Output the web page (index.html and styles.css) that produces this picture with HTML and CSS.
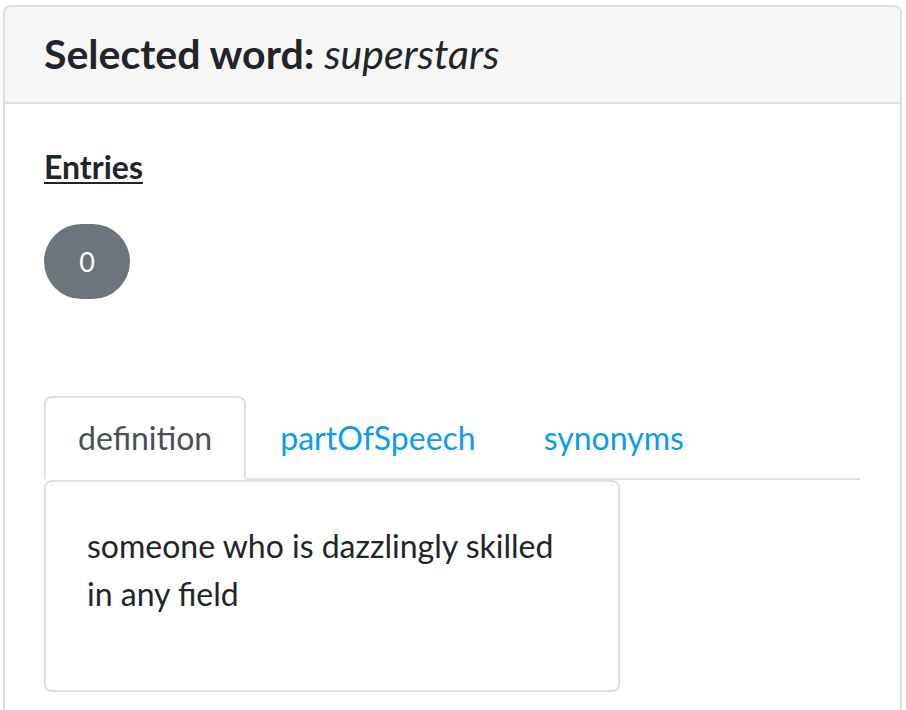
FILE: index.html
```html
<!DOCTYPE html>
<html>
<head>
<meta charset="utf-8">
<link rel="stylesheet" href="styles.css">
</head>
<body>
<div class="card">
  <div class="card-header">
    <h5 class="title">Selected word: <em>superstars</em></h5>
  </div>
  <div class="card-body">
    <p class="entries">Entries</p>
    <div class="badges"><span class="badge">0</span></div>
    <ul class="tabs">
      <li class="tab active">definition</li>
      <li class="tab">partOfSpeech</li>
      <li class="tab">synonyms</li>
    </ul>
    <div class="tab-content">
      <p>someone who is dazzlingly skilled in any field</p>
    </div>
  </div>
</div>
</body>
</html>
```
FILE: styles.css
```css
* { box-sizing: border-box; }
html, body { margin: 0; padding: 0; background: #fff; }
body {
  padding: 5px 4px 0 3px;
  font-family: Lato, "Noto Sans", sans-serif;
  font-size: 32px;
  line-height: 1.5;
  color: #212529;
}
.card {
  border: 2px solid #dfdfdf;
  border-bottom: none;
  border-radius: 8px 8px 0 0;
  height: 720px;
}
.card-header {
  background: #f7f7f7;
  border-bottom: 2px solid #dfdfdf;
  border-radius: 6px 6px 0 0;
  padding: 23px 39px 24px;
}
.title {
  margin: 0;
  font-size: 41px;
  font-weight: 700;
  line-height: 48px;
}
.title em { font-weight: 400; font-style: italic; }
.card-body {
  padding: 39px 40px 0 39px;
}
.entries {
  margin: 0;
  font-weight: 700;
  text-decoration: underline;
  text-underline-offset: 3px;
  text-decoration-thickness: 2px;
}
.badges { margin-top: 33px; display: flex; }
.badge {
  display: inline-flex;
  align-items: center;
  justify-content: center;
  width: 86px;
  height: 75px;
  border-radius: 38px;
  background: #6c757d;
  color: #fff;
  font-size: 27px;
  line-height: 1;
}
.tabs {
  list-style: none;
  margin: 97px 0 0 0;
  padding: 0;
  display: flex;
  border-bottom: 2px solid #dee2e6;
}
.tab {
  padding: 16px 32px;
  font-size: 32px;
  line-height: 48px;
  color: #0a9cf2;
  border: 2px solid transparent;
  border-radius: 8px 8px 0 0;
  margin-bottom: -2px;
}
.tab.active {
  color: #495057;
  background: #fff;
  border-color: #dee2e6 #dee2e6 #fff;
}
.tab-content {
  width: 576px;
  margin-top: 0;
  border: 2px solid #dfdfdf;
  border-radius: 8px;
  padding: 40px 40px 40px 41px;
}
.tab-content p {
  margin: 0 0 32px 0;
  font-size: 32px;
  line-height: 48px;
}
```
